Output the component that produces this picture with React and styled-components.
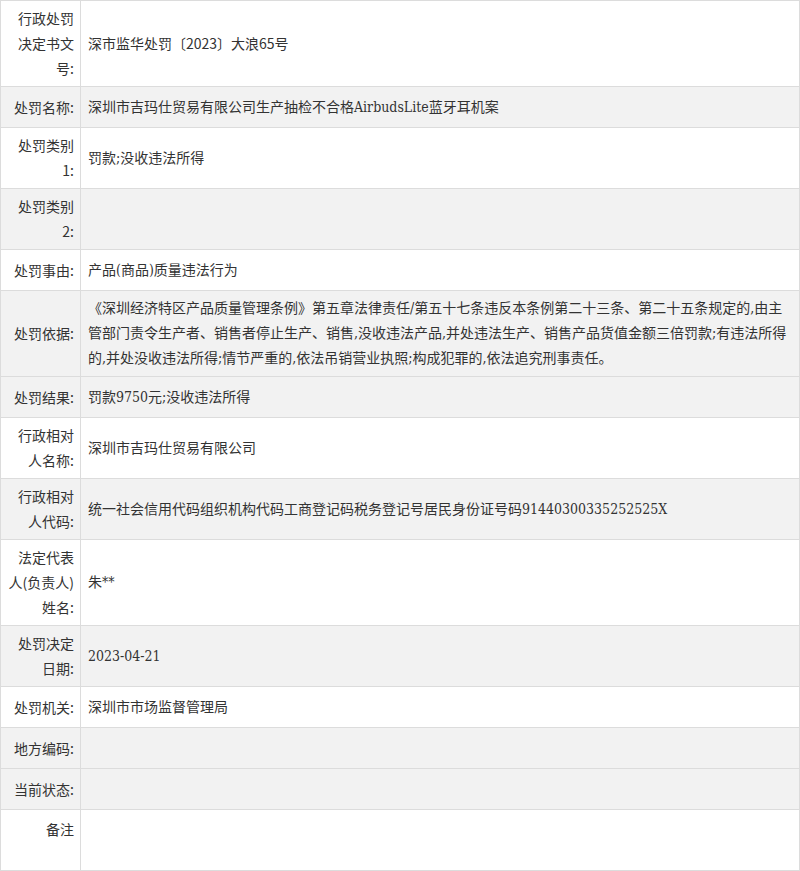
import React from "react";
import styled, { createGlobalStyle } from "styled-components";

const Global = createGlobalStyle`
  html, body { margin: 0; padding: 0; background: #fff; }
  * { box-sizing: border-box; }
`;

const Table = styled.div`
  width: 800px;
  border: 1px solid #dcdcdc;
  font-size: 14px;
  color: #333;
`;

const Row = styled.div`
  display: grid;
  grid-template-columns: 80px 1fr;
  background: ${(p) => (p.$shade ? "#f2f2f2" : "#fff")};
  & + & {
    border-top: 1px solid #dcdcdc;
  }
`;

const Label = styled.div`
  border-right: 1px solid #dcdcdc;
  padding: ${(p) => (p.$top ? "7px 6px 5px" : "5px 6px")};
  display: flex;
  align-items: ${(p) => (p.$top ? "flex-start" : "center")};
  justify-content: flex-end;
  text-align: right;
  line-height: 25px;
  font-family: "Noto Sans CJK SC", "Noto Sans", sans-serif;
`;

const Value = styled.div`
  min-height: ${(p) => (p.$tall ? "60px" : "40px")};
  padding: 5px 7px;
  display: flex;
  align-items: center;
  line-height: 25px;
  font-family: ${(p) =>
    p.$sans
      ? `"Noto Sans CJK SC", "Noto Sans", sans-serif`
      : `"DejaVu Serif Condensed", "Liberation Serif", "Noto Sans CJK SC", serif`};
`;

const rows = [
  { label: "行政处罚决定书文号:", value: "深市监华处罚〔2023〕大浪65号", sans: true },
  { label: "处罚名称:", value: "深圳市吉玛仕贸易有限公司生产抽检不合格AirbudsLite蓝牙耳机案", shade: true },
  { label: "处罚类别1:", value: "罚款;没收违法所得" },
  { label: "处罚类别2:", value: "", shade: true },
  { label: "处罚事由:", value: "产品(商品)质量违法行为" },
  {
    label: "处罚依据:",
    value:
      "《深圳经济特区产品质量管理条例》第五章法律责任/第五十七条违反本条例第二十三条、第二十五条规定的,由主管部门责令生产者、销售者停止生产、销售,没收违法产品,并处违法生产、销售产品货值金额三倍罚款;有违法所得的,并处没收违法所得;情节严重的,依法吊销营业执照;构成犯罪的,依法追究刑事责任。",
    shade: true,
  },
  { label: "处罚结果:", value: "罚款9750元;没收违法所得", shade: true },
  { label: "行政相对人名称:", value: "深圳市吉玛仕贸易有限公司" },
  { label: "行政相对人代码:", value: "统一社会信用代码组织机构代码工商登记码税务登记号居民身份证号码91440300335252525X", shade: true },
  { label: "法定代表人(负责人)姓名:", value: "朱**" },
  { label: "处罚决定日期:", value: "2023-04-21", shade: true },
  { label: "处罚机关:", value: "深圳市市场监督管理局" },
  { label: "地方编码:", value: "", shade: true },
  { label: "当前状态:", value: "", shade: true },
  { label: "备注", value: "", tall: true, top: true },
];

export default function App() {
  return (
    <>
      <Global />
      <Table>
        {rows.map((r, i) => (
          <Row key={i} $shade={r.shade}>
            <Label $top={r.top}>{r.label}</Label>
            <Value $sans={r.sans} $tall={r.tall}>{r.value}</Value>
          </Row>
        ))}
      </Table>
    </>
  );
}
